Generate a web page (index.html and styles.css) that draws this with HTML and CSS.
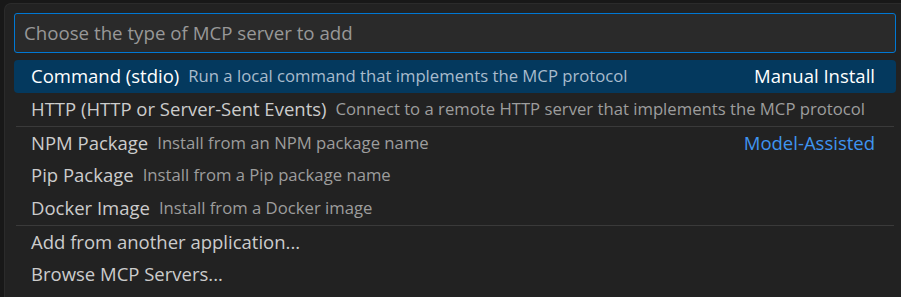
FILE: index.html
```html
<!DOCTYPE html>
<html>
<head>
<meta charset="utf-8">
<link rel="stylesheet" href="styles.css">
</head>
<body>
<div class="page">
  <div class="edge"></div>
  <div class="widget">
    <div class="input">Choose the type of MCP server to add</div>
    <div class="list">
      <div class="row selected">
        <span class="label">Command (stdio)</span>
        <span class="desc">Run a local command that implements the MCP protocol</span>
        <span class="tag">Manual Install</span>
      </div>
      <div class="row">
        <span class="label">HTTP (HTTP or Server-Sent Events)</span>
        <span class="desc">Connect to a remote HTTP server that implements the MCP protocol</span>
      </div>
      <div class="row sep">
        <span class="label">NPM Package</span>
        <span class="desc">Install from an NPM package name</span>
        <span class="tag link">Model-Assisted</span>
      </div>
      <div class="row">
        <span class="label">Pip Package</span>
        <span class="desc">Install from a Pip package name</span>
      </div>
      <div class="row">
        <span class="label">Docker Image</span>
        <span class="desc">Install from a Docker image</span>
      </div>
      <div class="row sep">
        <span class="label">Add from another application...</span>
      </div>
      <div class="row">
        <span class="label">Browse MCP Servers...</span>
      </div>
    </div>
  </div>
</div>
</body>
</html>
```
FILE: styles.css
```css
html, body {
  margin: 0;
  padding: 0;
  background: #181818;
  width: 901px;
  height: 297px;
  overflow: hidden;
}
.page {
  display: flex;
  padding-top: 3px;
  height: 294px;
}
.edge {
  width: 4px;
  flex: none;
}
.widget {
  flex: 1;
  background: #222222;
  border: 1px solid #2b2b2b;
  border-right: none;
  border-bottom: none;
  border-radius: 7px 0 0 0;
  padding: 9px 5px 0 9px;
  font-family: "Open Sans", "Noto Sans", sans-serif;
  font-size: 18.5px;
}
.input {
  box-sizing: border-box;
  height: 40px;
  border: 1px solid #0078d4;
  border-radius: 3px;
  background: #2a2a2a;
  color: #989898;
  padding: 0 9px 1px;
  display: flex;
  align-items: center;
  font-size: 18.7px;
}
.list {
  margin-top: 7px;
}
.row {
  box-sizing: border-box;
  height: 33px;
  display: flex;
  align-items: center;
  padding: 0 21px 2px 17px;
  white-space: nowrap;
}
.row.sep {
  border-top: 1px solid #3a3a3a;
  margin: 0 2px;
  padding: 0 19px 2px 15px;
}
.row.selected {
  background: #04395e;
  border-radius: 4px;
}
.label {
  color: #cccccc;
}
.desc {
  color: #9d9d9d;
  margin-left: 9px;
  font-size: 16.7px;
}
.selected .label {
  color: #ffffff;
}
.selected .desc {
  color: #a9bccd;
}
.tag {
  margin-left: auto;
  color: #ffffff;
}
.tag.link {
  color: #3f94f0;
}
```
